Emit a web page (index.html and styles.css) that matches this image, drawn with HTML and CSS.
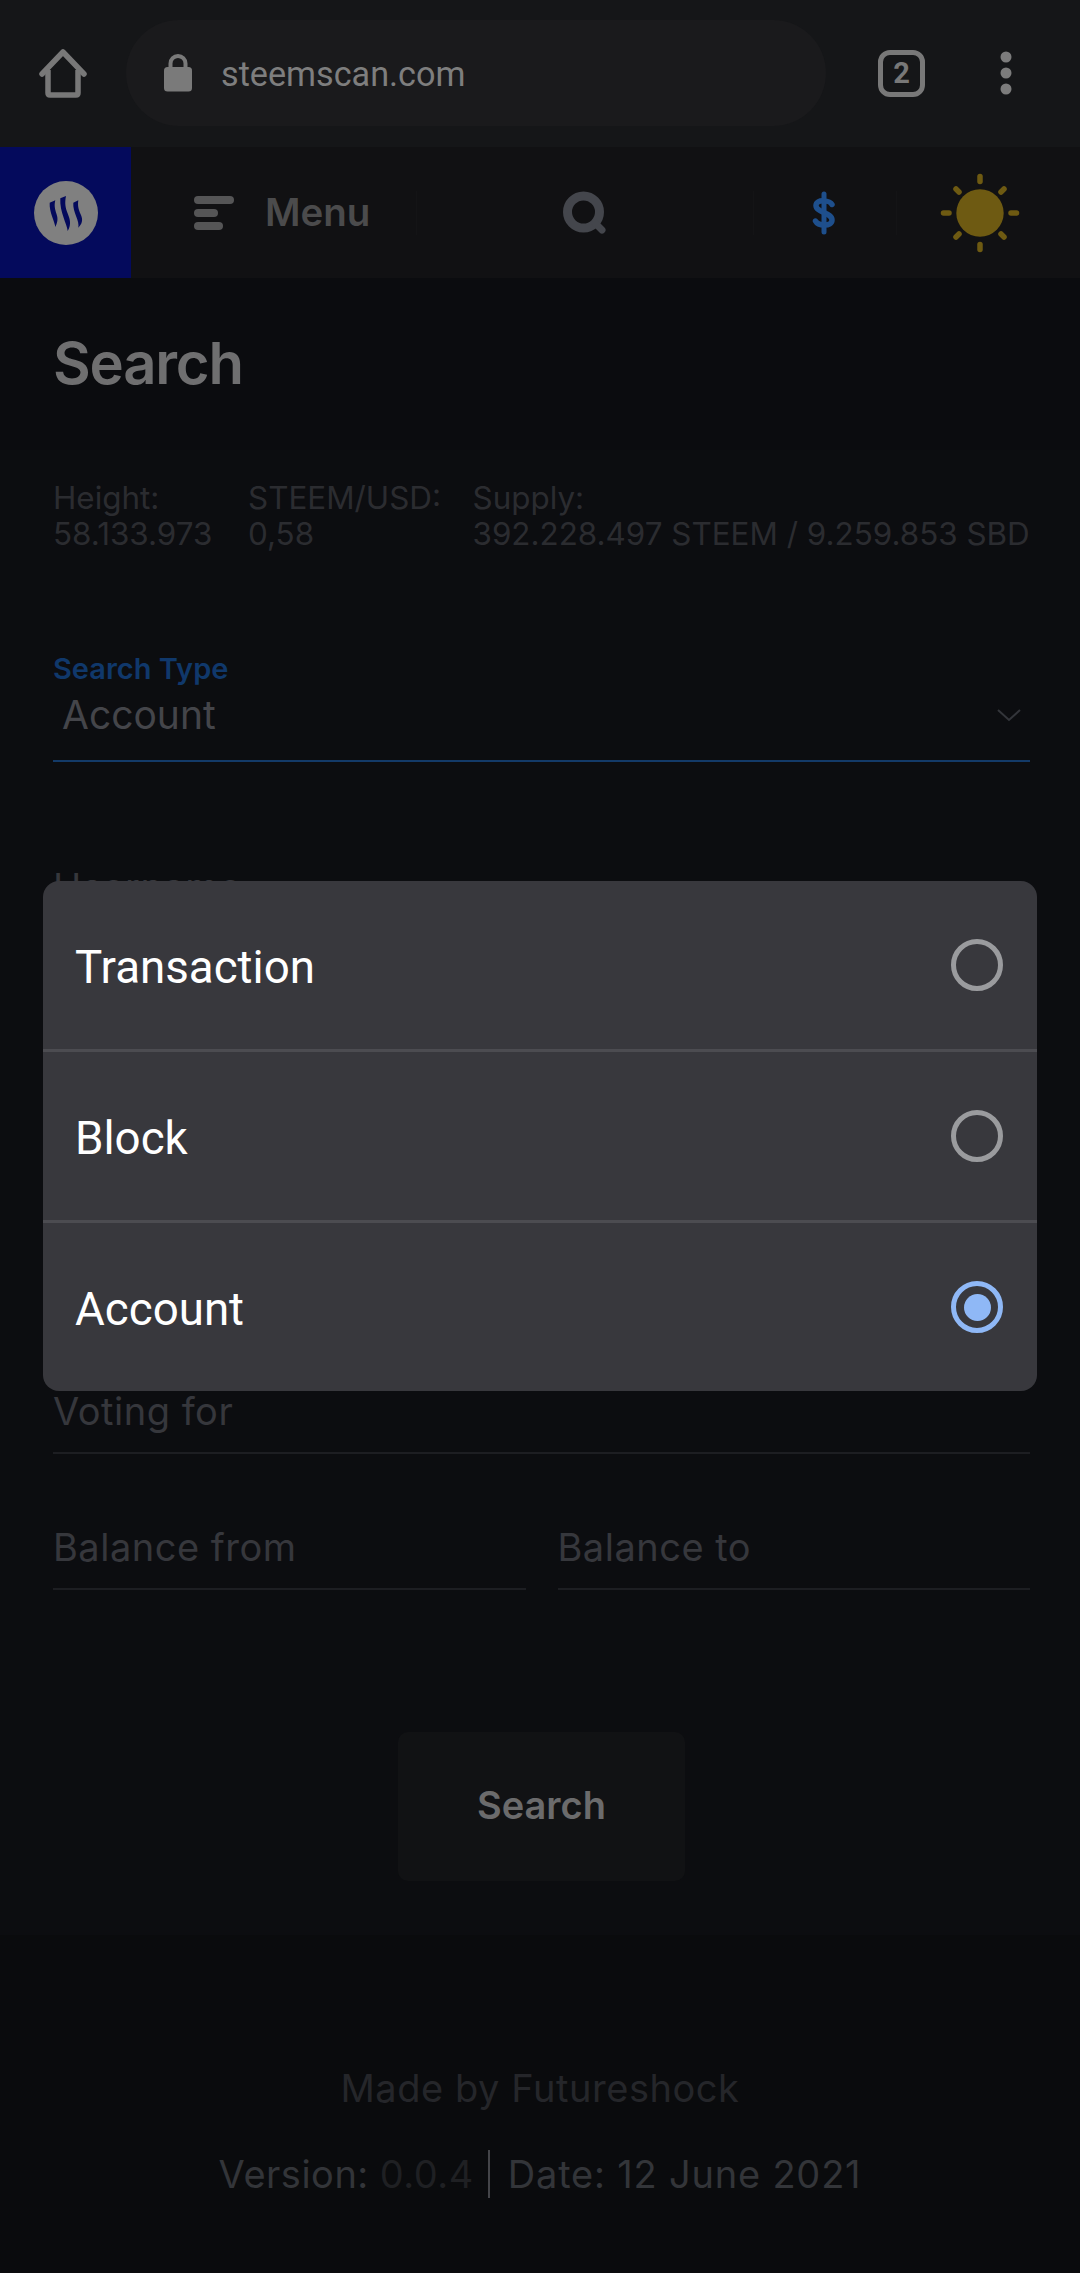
FILE: index.html
```html
<!DOCTYPE html>
<html lang="en">
<head>
<meta charset="utf-8">
<title>Search</title>
<link rel="stylesheet" href="styles.css">
</head>
<body>
<div class="screen">
  <header class="browser">
    <svg class="home" width="56" height="56" viewBox="0 0 56 56"><path d="M3 27 L24 5 L45 27" fill="none" stroke="#787878" stroke-width="5.5" stroke-linecap="round" stroke-linejoin="round"/><path d="M9 23 V46 Q9 48 11 48 H37 Q39 48 39 46 V23" fill="none" stroke="#787878" stroke-width="5.5" stroke-linejoin="round"/></svg>
    <div class="url">
      <svg class="lock" width="30" height="40" viewBox="0 0 30 40"><path d="M7.500 17 V10.500 A7.500 7.500 0 0 1 22.500 10.500 V17" fill="none" stroke="#7a7a7a" stroke-width="4"/><rect x="1" y="14" width="28" height="24.500" rx="3.500" fill="#7a7a7a"/></svg>
      <span class="url-text">steemscan.com</span>
    </div>
    <div class="tabs">2</div>
    <svg class="dots" width="12" height="44" viewBox="0 0 12 44"><circle cx="6" cy="6" r="5.500" fill="#7c7c7c"/><circle cx="6" cy="22" r="5.500" fill="#7c7c7c"/><circle cx="6" cy="38" r="5.500" fill="#7c7c7c"/></svg>
  </header>

  <nav class="nav">
    <div class="logo">
      <svg width="64" height="64" viewBox="0 0 64 64"><circle cx="32" cy="32" r="32" fill="#808080"/><path d="M15.700 21.700 L21.300 19.300 C20 25 21 28 22.500 33 C23.500 36 24.500 40 21.300 46 C21 41 15 31 15.700 21.700 Z M26.300 17.300 L32 15 C30.500 22 31.500 27 33.500 32 C35.500 37 38 43 33.700 50 C33 43 25.500 31 26.300 17.300 Z M39.300 21.700 L44.300 19.300 C43.500 25 44.500 28 46.500 33 C48 36.500 50 41 44.300 46.700 C46 40 38.500 31 39.300 21.700 Z" fill="#040a5c"/></svg>
    </div>
    <div class="menu">
      <div class="bars"><i class="bar-long"></i><i class="bar-short"></i><i class="bar-mid"></i></div>
      <span>Menu</span>
    </div>
    <div class="nav-search">
      <svg width="44" height="44" viewBox="0 0 44 44"><circle cx="20.500" cy="21" r="16" fill="none" stroke="#44464c" stroke-width="9"/><path d="M32 32 L39 39" stroke="#44464c" stroke-width="7" stroke-linecap="round"/></svg>
    </div>
    <div class="nav-dollar">
      <svg width="24" height="44" viewBox="0 0 24 44"><path d="M20 13.500 C18 9.500 4 7.500 4 14.500 C4 21.500 20 21.500 20 29 C20 36 6 35 3.500 30" fill="none" stroke="#1e4f8c" stroke-width="5.500" stroke-linecap="round"/><path d="M12 3 V41" stroke="#1e4f8c" stroke-width="5" stroke-linecap="round"/></svg>
    </div>
    <div class="nav-sun">
      <svg width="80" height="80" viewBox="0 0 80 80"><circle cx="40" cy="40" r="23.700" fill="#6e5a12"/><g stroke="#6e5a12" stroke-width="5.500" stroke-linecap="round"><path d="M40 3.500 V8.500"/><path d="M40 71.500 V76.500"/><path d="M3.500 40 H9"/><path d="M71 40 H76.500"/><path d="M16 16 L19 19"/><path d="M64 16 L61 19"/><path d="M16 64 L19 61"/><path d="M64 64 L61 61"/></g></svg>
    </div>
  </nav>

  <main class="content">
    <section class="title-band">
      <h1>Search</h1>
    </section>
    <section class="stats">
      <div class="stat stat-height">Height:<br>58.133.973</div>
      <div class="stat stat-price">STEEM/USD:<br>0,58</div>
      <div class="stat">Supply:<br>392.228.497 STEEM / 9.259.853 SBD</div>
    </section>
    <form class="form">
      <div class="select">
        <div class="select-label">Search Type</div>
        <div class="select-row">
          <span>Account</span>
          <svg width="26" height="14" viewBox="0 0 26 14"><path d="M2 2 L13 12 L24 2" fill="none" stroke="#33353a" stroke-width="2"/></svg>
        </div>
      </div>
      <div class="field field-username">Username</div>
      <div class="field field-voting">Voting for</div>
      <div class="pair">
        <div class="field">Balance from</div>
        <div class="field">Balance to</div>
      </div>
      <div class="actions"><button type="button" class="search-btn">Search</button></div>
    </form>
  </main>

  <footer class="footer">
    <div class="made">Made by Futureshock</div>
    <div class="version">Version: <span class="version-num">0.0.4</span><i class="sep"></i><span class="version-date">Date: 12 June 2021</span></div>
  </footer>

  <div class="sheet">
    <div class="option"><span>Transaction</span><i class="radio"></i></div>
    <div class="option"><span>Block</span><i class="radio"></i></div>
    <div class="option"><span>Account</span><i class="radio radio-on"></i></div>
  </div>
</div>
</body>
</html>
```
FILE: styles.css
```css
* { box-sizing: border-box; }
html, body { margin: 0; padding: 0; background: #0b0c0f; }
body { font-family: Inter, "Liberation Sans", sans-serif; }
.screen { position: relative; width: 1080px; height: 2273px; overflow: hidden; display: flex; flex-direction: column; }

.browser { height: 147px; flex: none; background: #151618; display: flex; align-items: center; padding-left: 39px; }
.home { flex: none; margin-top: 3px; }
.url { margin-left: 31px; width: 700px; height: 106px; border-radius: 53px; background: #1a1a1c; display: flex; align-items: center; padding-left: 37px; margin-top: -1px; }
.lock { flex: none; }
.url-text { margin-left: 28px; margin-top: 2px; font-family: Roboto, sans-serif; font-size: 34.200px; color: #7e7e7e; }
.tabs { margin-left: 52px; width: 47px; height: 47px; border: 5px solid #787878; border-radius: 12px; display: flex; align-items: center; justify-content: center; font-family: Roboto, sans-serif; font-weight: 700; font-size: 29px; color: #787878; margin-top: -1px; }
.dots { margin-left: 75px; margin-top: -1px; }

.nav { height: 131px; flex: none; background: #111113; display: flex; align-items: center; }
.logo { width: 131px; height: 131px; background: #040a5c; display: flex; align-items: center; justify-content: center; }
.menu { width: 286px; height: 44px; display: flex; align-items: center; padding-left: 63px; border-right: 1px solid #141416; }
.bars { width: 40px; display: flex; flex-direction: column; gap: 5px; }
.bars i { display: block; height: 8px; border-radius: 4px; background: #555556; }
.bar-long { width: 40px; }
.bar-short { width: 24px; }
.bar-mid { width: 29px; }
.menu span { margin-left: 31px; margin-top: -2px; font-size: 38.500px; font-weight: 600; color: #4b4b4c; }
.nav-search { width: 337px; height: 44px; display: flex; justify-content: center; align-items: center; border-right: 1px solid #141416; }
.nav-dollar { width: 143px; height: 44px; display: flex; justify-content: center; align-items: center; padding-right: 2px; border-right: 1px solid #141416; }
.nav-sun { flex: 1; height: 80px; display: flex; justify-content: center; align-items: center; padding-right: 18px; }

.content { flex: 1; display: flex; flex-direction: column; background: #0c0d10; }
.title-band { height: 172px; background: #0b0c0f; padding: 47px 53px 0; }
h1 { margin: 0; font-size: 58px; line-height: 76px; font-weight: 600; letter-spacing: -1.200px; color: #6f6f70; }

.stats { display: flex; padding: 30px 53px 0; font-size: 31.400px; line-height: 36px; color: #2b2c30; height: 183px; white-space: nowrap; }
.stat-height { width: 195px; flex: none; }
.stat-price { width: 224.500px; flex: none; }

.form { padding: 0 50px 0 53px; }
.select { height: 129px; border-bottom: 2px solid #133a68; }
.select-label { font-size: 29px; line-height: 34px; font-weight: 600; color: #10386b; padding-top: 19px; height: 53px; }
.select-row { display: flex; align-items: center; justify-content: space-between; font-size: 39px; line-height: 54px; color: #44454a; padding: 2px 8px 0 9px; }

.field { flex: 1; height: 66px; border-bottom: 2px solid #1d1e22; font-size: 38px; line-height: 46px; letter-spacing: 0.500px; color: #36373c; }
.field-username { margin-top: 102px; }
.field-voting { margin-top: 458px; }
.pair { display: flex; gap: 32px; margin-top: 70px; }

.actions { display: flex; justify-content: center; margin-top: 142px; }
.search-btn { width: 287px; height: 149px; border: 0; border-radius: 10px; background: #111214; font-family: Inter, sans-serif; font-size: 38px; line-height: 44px; font-weight: 600; color: #6b6b6c; padding: 0 0 3px; }

.footer { height: 338px; flex: none; background: #0a0b0d; text-align: center; }
.made { margin-top: 128px; font-size: 38px; line-height: 50px; letter-spacing: 0.550px; color: #25262a; }
.version { margin-top: 35px; font-size: 38px; line-height: 52px; letter-spacing: 0.500px; color: #333539; display: flex; justify-content: center; align-items: center; }
.version-num { color: #1f2023; margin-left: 11px; }
.version-date { letter-spacing: 0.800px; }
.sep { display: block; width: 2px; height: 48px; background: #444549; margin: 0 18px 0 14px; }

.sheet { position: absolute; left: 43px; top: 881px; width: 994px; height: 510px; background: #38383d; border-radius: 16px; display: flex; flex-direction: column; }
.option { flex: 1; display: flex; align-items: center; justify-content: space-between; padding: 0 34px 0 32px; font-family: Roboto, sans-serif; font-size: 45.700px; color: #fff; }
.option + .option { border-top: 3px solid #4c4c51; }
.option span { margin-top: 4px; }
.radio { display: block; position: relative; width: 52px; height: 52px; border: 5px solid #9a9b9e; border-radius: 50%; }
.radio-on { border-color: #8fb8f6; }
.radio-on::after { content: ""; position: absolute; left: 7.500px; top: 7.500px; width: 27px; height: 27px; border-radius: 50%; background: #8fb8f6; }
```
